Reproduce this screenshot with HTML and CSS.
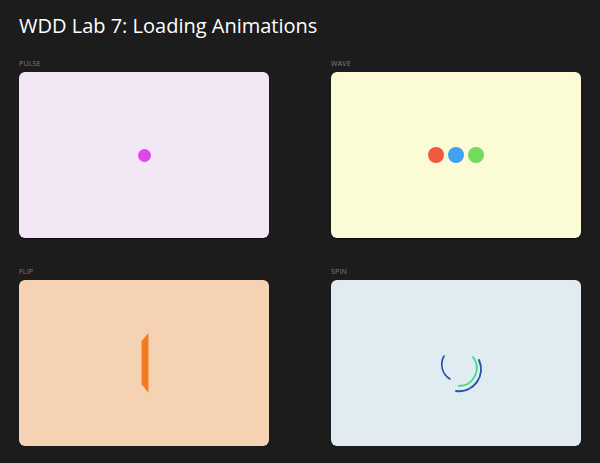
FILE: index.html
```html
<!DOCTYPE html>
<html>
<head>
<meta charset="utf-8">
<link rel="stylesheet" href="styles.css">
</head>
<body>
<h1 class="title">WDD Lab 7: Loading Animations</h1>
<div class="grid">
  <section class="item">
    <div class="label">PULSE</div>
    <div class="card pulse"><div class="dot-pulse"></div></div>
  </section>
  <section class="item">
    <div class="label">WAVE</div>
    <div class="card wave">
      <div class="dots">
        <span class="dot red"></span><span class="dot blue"></span><span class="dot green"></span>
      </div>
    </div>
  </section>
  <section class="item">
    <div class="label">FLIP</div>
    <div class="card flip">
      <svg class="flip-shape" width="20" height="70" viewBox="0 0 20 70"><polygon points="7.5,13 14.5,5 14.5,65 7.5,56" fill="#f47c20"/></svg>
    </div>
  </section>
  <section class="item">
    <div class="label">SPIN</div>
    <div class="card spin">
      <svg class="spinner" width="60" height="60" viewBox="0 0 60 60" fill="none" stroke-linecap="round">
        <path d="M18 20 A 17 17 0 0 0 24 43" stroke="#2b4fae" stroke-width="1.6"/>
        <path d="M47 21 A 18 18 0 0 1 33 50" stroke="#3ddc84" stroke-width="1.8"/>
        <path d="M53 24 A 22 22 0 0 1 30 55" stroke="#2b4fae" stroke-width="2"/>
      </svg>
    </div>
  </section>
</div>
</body>
</html>
```
FILE: styles.css
```css
html, body {
  margin: 0;
  background: #1c1c1c;
}
body {
  padding: 13px 19px 0 19px;
  font-family: "Open Sans", "Noto Sans", sans-serif;
}
.title {
  margin: 0;
  font-family: "Open Sans", sans-serif;
  font-weight: 400;
  font-size: 20px;
  line-height: 26px;
  color: #ffffff;
  letter-spacing: 0;
}
.grid {
  margin-top: 20px;
  display: grid;
  grid-template-columns: 250px 250px;
  column-gap: 62px;
  row-gap: 29px;
}
.label {
  font-size: 7px;
  line-height: 9px;
  color: #808080;
  margin-bottom: 4px;
  letter-spacing: 0.2px;
}
.card {
  height: 166px;
  border-radius: 6px;
  box-shadow: 0 1px 1px rgba(0,0,0,0.6);
  display: flex;
  align-items: center;
  justify-content: center;
}
.pulse { background: #f3e7f5; }
.wave { background: #fbfbd6; }
.flip { background: #f6d2b4; }
.spin { background: #e0ecf2; }
.dot-pulse {
  width: 13px;
  height: 13px;
  border-radius: 50%;
  background: #e046ee;
}
.dots {
  display: flex;
  gap: 4px;
}
.dot {
  width: 16px;
  height: 16px;
  border-radius: 50%;
}
.dot.red { background: #f05a3c; }
.dot.blue { background: #41a2f2; }
.dot.green { background: #6fdc5a; }
.flip-shape { display: block; }
.spinner { display: block; margin-top: 6px; }
```
